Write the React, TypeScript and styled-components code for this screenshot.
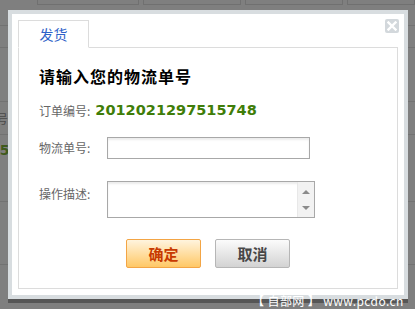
import styled, { createGlobalStyle } from "styled-components";

const GlobalStyle = createGlobalStyle`
  html, body {
    margin: 0;
    padding: 0;
  }
  body {
    background: #7f7f7f;
    font-family: "Noto Sans CJK SC", "DejaVu Sans", sans-serif;
  }
`;

export default function App() {
  return (
    <>
      <GlobalStyle />
      <Page>
        <Backdrop>
          <TopCells>
            <Cell w={105} />
            <Cell w={100} />
            <Cell w={100} />
            <Cell w={70} />
          </TopCells>
          <BgRow h={21} />
          <BgRow h={22} />
          <BgRow h={54} />
          <BgRow h={33}>
            <BgText>编号</BgText>
          </BgRow>
          <BgRow h={67}>
            <BgNumber>75</BgNumber>
          </BgRow>
          <BgRow h={63} />
        </Backdrop>

        <Dialog>
          <CloseButton aria-label="关闭">
            <svg width="10" height="10" viewBox="0 0 10 10">
              <path d="M1.5 1.5 L8.5 8.5 M8.5 1.5 L1.5 8.5" stroke="#fff" strokeWidth="2.4" strokeLinecap="square" />
            </svg>
          </CloseButton>
          <TabBar>
            <Tab>发货</Tab>
          </TabBar>
          <Panel>
            <Title>请输入您的物流单号</Title>
            <OrderRow>
              <Label>订单编号:</Label>
              <OrderNo>2012021297515748</OrderNo>
            </OrderRow>
            <FieldRow>
              <FieldLabel>物流单号:</FieldLabel>
              <Input />
            </FieldRow>
            <FieldRow gap={22}>
              <FieldLabel top={2}>操作描述:</FieldLabel>
              <TextBox>
                <Area />
                <ScrollRail>
                  <Arrow dir="up" />
                  <Arrow dir="down" />
                </ScrollRail>
              </TextBox>
            </FieldRow>
            <Buttons>
              <Button variant="primary">确定</Button>
              <Button variant="plain">取消</Button>
            </Buttons>
          </Panel>
        </Dialog>

        <Watermark>【 自部网 】 www.pcdo.cn</Watermark>
      </Page>
    </>
  );
}

const Page = styled.div`
  position: relative;
  width: 415px;
  height: 309px;
  overflow: hidden;
  background: #7f7f7f;
`;

const Backdrop = styled.div`
  display: flex;
  flex-direction: column;
`;

const TopCells = styled.div`
  display: flex;
  gap: 4px;
  height: 5px;
  padding-left: 37px;
`;

const Cell = styled.div<{ w: number }>`
  width: ${(p) => p.w}px;
  box-sizing: border-box;
  border: 1px solid #707070;
  border-top: none;
`;

const BgRow = styled.div<{ h: number }>`
  height: ${(p) => p.h}px;
  box-sizing: border-box;
  border-bottom: 1px solid #727272;
  display: flex;
  align-items: center;
`;

const BgText = styled.span`
  margin-left: -16px;
  font-size: 12px;
  color: #4a4a4a;
`;

const BgNumber = styled.span`
  margin-left: -10px;
  margin-top: -36px;
  font-family: "DejaVu Sans", sans-serif;
  font-weight: bold;
  font-size: 14px;
  color: #3f5a1c;
`;

const Dialog = styled.div`
  position: absolute;
  left: 8px;
  top: 10px;
  width: 400px;
  height: 289px;
  box-sizing: border-box;
  border: 4px solid #d8dde0;
  background: #fff;
  box-shadow: 0 4px 0 #565656;
  padding: 6px;
  display: flex;
  flex-direction: column;
`;

const CloseButton = styled.button`
  position: absolute;
  top: 5px;
  right: 5px;
  width: 14px;
  height: 14px;
  padding: 0;
  border: none;
  border-radius: 2px;
  background: #d3d8dc;
  display: flex;
  align-items: center;
  justify-content: center;
`;

const TabBar = styled.div`
  display: flex;
  margin-bottom: -1px;
`;

const Tab = styled.div`
  position: relative;
  width: 71px;
  height: 28px;
  box-sizing: border-box;
  border: 1px solid #dcdcdc;
  border-bottom-color: #fff;
  background: #fff;
  color: #2f62c8;
  font-size: 14px;
  line-height: 26px;
  text-align: center;
`;

const Panel = styled.div`
  flex: 1;
  border: 1px solid #dcdcdc;
  padding: 0 20px;
  display: flex;
  flex-direction: column;
`;

const Title = styled.h2`
  margin: 17px 0 0;
  height: 22px;
  line-height: 22px;
  font-size: 16px;
  font-weight: bold;
  letter-spacing: 1px;
  color: #000;
`;

const OrderRow = styled.div`
  margin-top: 13px;
  height: 20px;
  display: flex;
  align-items: center;
  gap: 5px;
`;

const Label = styled.span`
  font-size: 12px;
  color: #666;
`;

const OrderNo = styled.span`
  font-family: "DejaVu Sans", sans-serif;
  font-weight: bold;
  font-size: 14.5px;
  color: #3f7d08;
`;

const FieldRow = styled.div<{ gap?: number }>`
  margin-top: ${(p) => p.gap ?? 17}px;
  display: flex;
  align-items: flex-start;
`;

const FieldLabel = styled.span<{ top?: number }>`
  width: 68px;
  padding-top: ${(p) => p.top ?? 0}px;
  line-height: 22px;
  font-size: 12px;
  color: #666;
`;

const Input = styled.input`
  width: 203px;
  height: 22px;
  box-sizing: border-box;
  margin: 0;
  border: 1px solid #a8a8a8;
  box-shadow: inset 0 2px 2px rgba(0, 0, 0, 0.08);
  outline: none;
`;

const TextBox = styled.div`
  width: 208px;
  height: 37px;
  box-sizing: border-box;
  border: 1px solid #a8a8a8;
  display: flex;
  box-shadow: inset 0 2px 2px rgba(0, 0, 0, 0.08);
`;

const Area = styled.textarea`
  flex: 1;
  margin: 0;
  border: none;
  background: transparent;
  resize: none;
  outline: none;
`;

const ScrollRail = styled.div`
  width: 16px;
  border-left: 1px solid #e8e8e8;
  background: #f2f2f2;
  display: flex;
  flex-direction: column;
  justify-content: space-between;
  align-items: center;
  padding: 8px 0 7px;
`;

const Arrow = styled.span<{ dir: "up" | "down" }>`
  width: 0;
  height: 0;
  border-left: 4px solid transparent;
  border-right: 4px solid transparent;
  ${(p) =>
    p.dir === "up"
      ? "border-bottom: 4px solid #8a8a8a;"
      : "border-top: 4px solid #8a8a8a;"}
`;

const Buttons = styled.div`
  margin-top: 21px;
  display: flex;
  justify-content: center;
  gap: 14px;
`;

const Button = styled.button<{ variant: "primary" | "plain" }>`
  width: 75px;
  height: 29px;
  box-sizing: border-box;
  border-radius: 2px;
  font-family: "Noto Sans CJK SC", sans-serif;
  font-size: 15px;
  font-weight: bold;
  border: 1px solid ${(p) => (p.variant === "primary" ? "#f3a545" : "#b6b6b6")};
  color: ${(p) => (p.variant === "primary" ? "#c83a00" : "#474747")};
  background: ${(p) =>
    p.variant === "primary"
      ? "linear-gradient(#fff4de, #ffc866)"
      : "linear-gradient(#fbfbfb, #d3d3d3)"};
`;

const Watermark = styled.div`
  position: absolute;
  left: 252px;
  top: 294px;
  font-size: 12px;
  line-height: 14px;
  letter-spacing: 0.4px;
  color: #fff;
  white-space: nowrap;
`;
